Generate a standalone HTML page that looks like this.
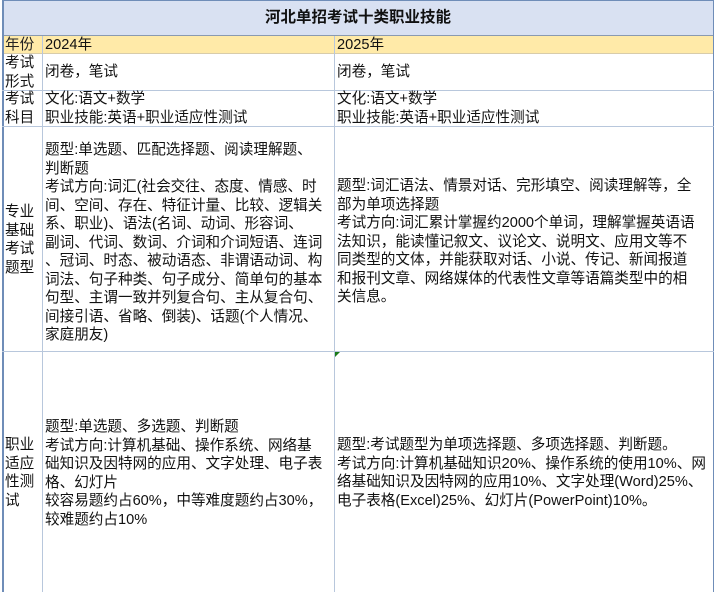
<!DOCTYPE html>
<html><head><meta charset="utf-8"><style>
body{margin:0;width:719px;height:592px;background:#fff;position:relative;overflow:hidden;font-family:"Liberation Sans","Noto Sans CJK SC","WenQuanYi Zen Hei",sans-serif;color:#111;font-size:14.6px;line-height:18.5px}
.a{position:absolute;box-sizing:border-box}
.v{border-left:1px solid #b8c7dc}
.h{border-top:1px solid #b8c7dc}
.t{position:absolute;white-space:nowrap}
</style></head><body>
<div class="a" style="left:2px;top:0;width:712px;height:36px;background:#d9e1f2;border:1px solid #6f8db8;border-bottom:1px solid #8a9ab0"></div>
<div class="t" style="left:0;width:716px;top:9px;text-align:center;font-weight:bold;font-size:15.5px">河北单招考试十类职业技能</div>
<div class="a" style="left:2px;top:36px;width:712px;height:18px;background:#ffeaa8;border-bottom:1px solid #d8ccaa"></div>
<div class="a" style="left:2px;top:0;height:592px;border-left:2px solid #6f8db8"></div>
<div class="a" style="left:713px;top:0;height:592px;border-left:1px solid #6f8db8"></div>
<div class="a v" style="left:42px;top:36px;height:556px"></div>
<div class="a v" style="left:334px;top:36px;height:556px"></div>
<div class="a h" style="left:2px;top:90px;width:712px"></div>
<div class="a h" style="left:2px;top:126px;width:712px"></div>
<div class="a h" style="left:2px;top:351px;width:712px"></div>
<div class="a" style="left:335px;top:352px;width:0;height:0;border-top:5px solid #1a7a1a;border-right:5px solid transparent"></div>

<div class="t" style="left:5px;top:36px;color:#222">年份</div>
<div class="t" style="left:45px;top:36px">2024年</div>
<div class="t" style="left:337px;top:36px">2025年</div>

<div class="t" style="left:5px;top:54px">考试<br>形式</div>
<div class="t" style="left:45px;top:63px">闭卷，笔试</div>
<div class="t" style="left:337px;top:63px">闭卷，笔试</div>

<div class="t" style="left:5px;top:90px">考试<br>科目</div>
<div class="t" style="left:45px;top:90px">文化:语文+数学<br>职业技能:英语+职业适应性测试</div>
<div class="t" style="left:337px;top:90px">文化:语文+数学<br>职业技能:英语+职业适应性测试</div>

<div class="t" style="left:5px;top:203px">专业<br>基础<br>考试<br>题型</div>
<div class="t" style="left:45px;top:141px">题型:单选题、匹配选择题、阅读理解题、<br>判断题<br>考试方向:词汇(社会交往、态度、情感、时<br>间、空间、存在、特征计量、比较、逻辑关<br>系、职业)、语法(名词、动词、形容词、<br>副词、代词、数词、介词和介词短语、连词<br>、冠词、时态、被动语态、非谓语动词、构<br>词法、句子种类、句子成分、简单句的基本<br>句型、主谓一致并列复合句、主从复合句、<br>间接引语、省略、倒装)、话题(个人情况、<br>家庭朋友)</div>
<div class="t" style="left:337px;top:177px">题型:词汇语法、情景对话、完形填空、阅读理解等，全<br>部为单项选择题<br>考试方向:词汇累计掌握约2000个单词，理解掌握英语语<br>法知识，能读懂记叙文、议论文、说明文、应用文等不<br>同类型的文体，并能获取对话、小说、传记、新闻报道<br>和报刊文章、网络媒体的代表性文章等语篇类型中的相<br>关信息。</div>

<div class="t" style="left:5px;top:436px">职业<br>适应<br>性测<br>试</div>
<div class="t" style="left:45px;top:418px">题型:单选题、多选题、判断题<br>考试方向:计算机基础、操作系统、网络基<br>础知识及因特网的应用、文字处理、电子表<br>格、幻灯片<br>较容易题约占60%，中等难度题约占30%，<br>较难题约占10%</div>
<div class="t" style="left:337px;top:436px">题型:考试题型为单项选择题、多项选择题、判断题。<br>考试方向:计算机基础知识20%、操作系统的使用10%、网<br>络基础知识及因特网的应用10%、文字处理(Word)25%、<br>电子表格(Excel)25%、幻灯片(PowerPoint)10%。</div>
</body></html>
